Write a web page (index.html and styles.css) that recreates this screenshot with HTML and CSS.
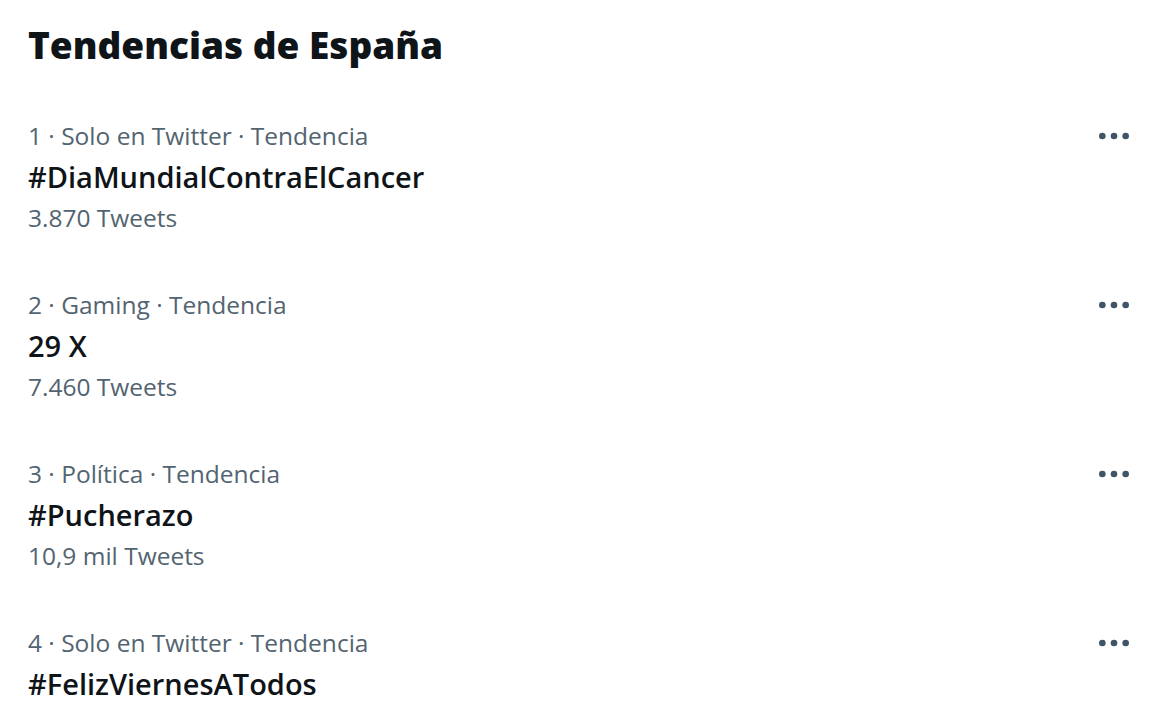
FILE: index.html
```html
<!DOCTYPE html>
<html lang="es">
<head>
<meta charset="utf-8">
<link rel="stylesheet" href="styles.css">
</head>
<body>
<div class="panel">
  <h2 class="title">Tendencias de España</h2>
  <div class="trend">
    <div class="info">
      <div class="meta">1 · Solo en Twitter · Tendencia</div>
      <div class="name">#DiaMundialContraElCancer</div>
      <div class="count">3.870 Tweets</div>
    </div>
    <div class="more"><svg viewBox="0 0 24 24" width="40" height="40"><circle cx="5" cy="12" r="2"/><circle cx="12" cy="12" r="2"/><circle cx="19" cy="12" r="2"/></svg></div>
  </div>
  <div class="trend">
    <div class="info">
      <div class="meta">2 · Gaming · Tendencia</div>
      <div class="name">29 X</div>
      <div class="count">7.460 Tweets</div>
    </div>
    <div class="more"><svg viewBox="0 0 24 24" width="40" height="40"><circle cx="5" cy="12" r="2"/><circle cx="12" cy="12" r="2"/><circle cx="19" cy="12" r="2"/></svg></div>
  </div>
  <div class="trend">
    <div class="info">
      <div class="meta">3 · Política · Tendencia</div>
      <div class="name">#Pucherazo</div>
      <div class="count">10,9 mil Tweets</div>
    </div>
    <div class="more"><svg viewBox="0 0 24 24" width="40" height="40"><circle cx="5" cy="12" r="2"/><circle cx="12" cy="12" r="2"/><circle cx="19" cy="12" r="2"/></svg></div>
  </div>
  <div class="trend">
    <div class="info">
      <div class="meta">4 · Solo en Twitter · Tendencia</div>
      <div class="name">#FelizViernesATodos</div>
    </div>
    <div class="more"><svg viewBox="0 0 24 24" width="40" height="40"><circle cx="5" cy="12" r="2"/><circle cx="12" cy="12" r="2"/><circle cx="19" cy="12" r="2"/></svg></div>
  </div>
</div>
</body>
</html>
```

FILE: styles.css
```css
html, body {
  margin: 0;
  padding: 0;
  background: #ffffff;
  overflow: hidden;
}
.panel {
  font-family: "Open Sans", "Noto Sans", sans-serif;
  padding: 20px 0 0 28px;
  height: 723px;
  box-sizing: border-box;
  overflow: hidden;
}
.title {
  margin: 0 0 45px 0;
  font-size: 37px;
  line-height: 50px;
  font-weight: 800;
  color: #0f1419;
}
.trend {
  display: flex;
  justify-content: space-between;
  align-items: flex-start;
  height: 169px;
}
.meta, .count {
  font-size: 24.5px;
  line-height: 42px;
  color: #536471;
}
.name {
  font-size: 29px;
  line-height: 40px;
  font-weight: 600;
  color: #0f1419;
}
.more {
  margin-right: 26px;
  margin-top: 1px;
}
.more svg {
  fill: #3f5466;
  display: block;
}
```
